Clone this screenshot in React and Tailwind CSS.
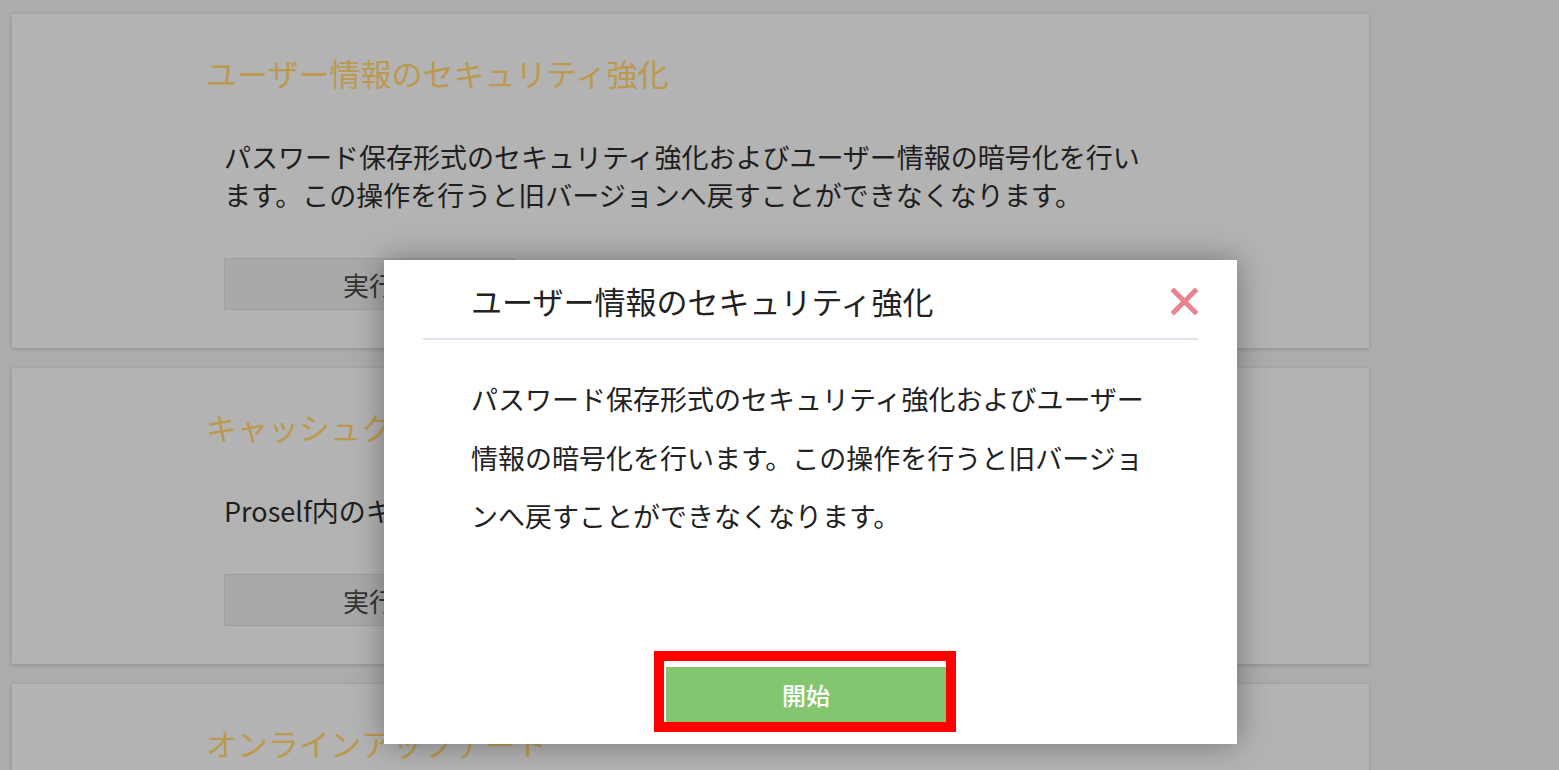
const jp = { fontFamily: '"Noto Sans CJK JP", "Noto Sans", sans-serif' }

const cards = [
  {
    title: 'ユーザー情報のセキュリティ強化',
    text: 'パスワード保存形式のセキュリティ強化およびユーザー情報の暗号化を行います。この操作を行うと旧バージョンへ戻すことができなくなります。',
  },
  {
    title: 'キャッシュクリア',
    text: 'Proself内のキャッシュをクリアします。',
  },
  {
    title: 'オンラインアップデート',
    text: 'オンラインでProselfのアップデートを行います。',
  },
]

const Card = ({ title, text }) => (
  <div className="bg-[#b3b3b3] shadow-[0_1px_4px_rgba(0,0,0,0.18)] pt-[37px] pb-[38px]">
    <h2 className="pl-[194px] text-[31px] leading-[44px] text-[#bb994e] font-normal">{title}</h2>
    <div className="pl-[212px] mt-[43px]">
      <p className="w-[940px] text-[27px] leading-[38px] text-[#1e1e1e]">{text}</p>
      <button className="mt-[44px] w-[290px] h-[52px] bg-[#a8aaaa] border border-[#9ea0a0] text-[26px] text-[#333]">
        実行
      </button>
    </div>
  </div>
)

const CloseIcon = () => (
  <svg width="27" height="27" viewBox="0 0 27 27">
    <path d="M3 3 L24 24 M24 3 L3 24" stroke="#e8848f" strokeWidth="5" strokeLinecap="square" fill="none" />
  </svg>
)

export default function App() {
  return (
    <div className="relative w-[1559px] h-[770px] overflow-hidden bg-[#acacac]" style={jp}>
      <div className="w-[1357px] ml-[12px] pt-[14px] flex flex-col gap-[20px]">
        {cards.map((c) => (
          <Card key={c.title} {...c} />
        ))}
      </div>

      {/* modal */}
      <div className="absolute left-[384px] top-[260px] w-[853px] h-[484px] bg-white shadow-[0_0_30px_rgba(0,0,0,0.35)] px-[39px] flex flex-col">
        <div className="flex items-center justify-between pt-[19px] pb-[15px] pl-[48px] border-b-2 border-[#dfe4ec]">
          <h3 className="text-[31px] leading-[44px] text-[#222] font-normal">ユーザー情報のセキュリティ強化</h3>
          <CloseIcon />
        </div>
        <p className="mt-[30px] ml-[48px] w-[690px] text-[27px] leading-[58.5px] text-[#222]">
          パスワード保存形式のセキュリティ強化およびユーザー情報の暗号化を行います。この操作を行うと旧バージョンへ戻すことができなくなります。
        </p>
        <div className="mt-auto mb-[12px] flex justify-center pr-[11px]">
          <div className="border-[10px] border-[#ff0000] pt-[6px] pl-[2px]">
            <button className="w-[280px] h-[55px] bg-[#84c56f] text-white text-[24px] font-medium">
              開始
            </button>
          </div>
        </div>
      </div>
    </div>
  )
}
